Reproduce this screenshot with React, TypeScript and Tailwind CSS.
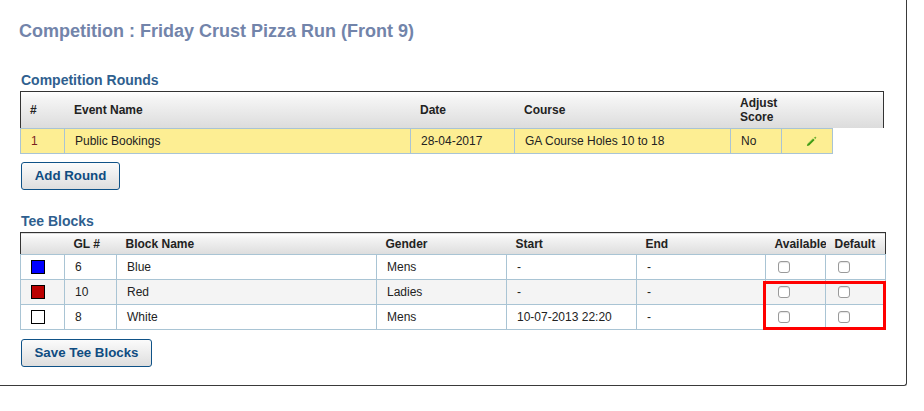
const headBg = "bg-[linear-gradient(#ffffff_0%,#f4f4f4_20%,#dcdcdc_100%)]";

function Pencil() {
  return (
    <svg width="11" height="11" viewBox="0 0 12 12" className="block ml-[24px]">
      <path d="M1 11 L1.6 8.6 L7.6 2.6 L9.4 4.4 L3.4 10.4 Z" fill="#3f9a12" />
      <path d="M2.4 8.4 L7.6 3.2" stroke="#86c95a" strokeWidth="0.7" />
      <path d="M10 0.5 L10.5 1.6 L11.6 2 L10.5 2.4 L10 3.5 L9.5 2.4 L8.4 2 L9.5 1.6 Z" fill="#3f9a12" />
    </svg>
  );
}

function Check() {
  return <span className="block w-[12px] h-[12px] rounded-[3px] border border-[#9a9a9a] bg-white shadow-[inset_0_1px_1px_#e4e4e4]" />;
}

function Swatch({ c }: { c: string }) {
  return <span className={`block w-[14px] h-[14px] border border-black ${c}`} />;
}

function Button({ children, w }: { children: string; w: string }) {
  return (
    <button className={`${w} h-[28px] rounded-[3px] border border-[#0f5287] text-[13.3px] font-bold text-[#0f4c81] bg-[linear-gradient(#fbfbfb,#dedede)]`}>
      {children}
    </button>
  );
}

const td = "border border-[#a9c4d4] text-[12px] text-[#222] p-0";
const th = "text-left text-[12px] font-bold text-[#222] p-0";

const tees = [
  { c: "bg-[#0000ff]", gl: "6", name: "Blue", g: "Mens", s: "-", bg: "bg-white" },
  { c: "bg-[#bb0000]", gl: "10", name: "Red", g: "Ladies", s: "-", bg: "bg-[#f4f4f4]" },
  { c: "bg-white", gl: "8", name: "White", g: "Mens", s: "10-07-2013 22:20", bg: "bg-white" },
];

export default function App() {
  return (
    <div className="w-[924px] h-[411px] bg-white overflow-hidden font-['Liberation_Sans',Arial,sans-serif]">
      <div className="relative w-[907px] h-[386px] border-r border-b border-[#3a3a3a] rounded-br-[3px]">
        <h1 className="pl-[19px] pt-[20px] h-[72px] text-[18px] leading-[22px] font-bold text-[#7284aa]">
          Competition : Friday Crust Pizza Run (Front 9)
        </h1>
        <h2 className="pl-[21px] h-[19px] text-[14px] leading-[16px] font-bold text-[#2f5f8f]">Competition Rounds</h2>

        <div className="ml-[20px] w-[864px]">
          <div className={`flex items-center h-[37px] border-t border-l border-r border-[#333] ${headBg} text-[12px] font-bold text-[#222] leading-[14px]`}>
            <span className="w-[53px] pl-[9px]">#</span>
            <span className="w-[346px]">Event Name</span>
            <span className="w-[104px]">Date</span>
            <span className="w-[216px]">Course</span>
            <span className="w-[100px]">Adjust<br />Score</span>
          </div>
          <table className="table-fixed border-collapse w-[812px] bg-[#fdee93]">
            <colgroup>
              <col className="w-[44px]" />
              <col className="w-[346px]" />
              <col className="w-[104px]" />
              <col className="w-[216px]" />
              <col className="w-[51px]" />
              <col className="w-[51px]" />
            </colgroup>
            <tbody>
              <tr className="h-[25px]">
                <td className={`${td} pl-[10px] !text-[#7a1f1f]`}>1</td>
                <td className={`${td} pl-[10px]`}>Public Bookings</td>
                <td className={`${td} pl-[10px]`}>28-04-2017</td>
                <td className={`${td} pl-[10px]`}>GA Course Holes 10 to 18</td>
                <td className={`${td} pl-[10px]`}>No</td>
                <td className={td}><Pencil /></td>
              </tr>
            </tbody>
          </table>
        </div>

        <div className="pl-[21px] pt-[8px]">
          <Button w="w-[99px]">Add Round</Button>
        </div>

        <h2 className="pl-[21px] pt-[23px] h-[42px] text-[14px] leading-[16px] font-bold text-[#2f5f8f]">Tee Blocks</h2>

        <div className="relative ml-[20px] w-[865px]">
          <table className="table-fixed border-collapse w-[865px]">
            <colgroup>
              <col className="w-[44px]" />
              <col className="w-[52px]" />
              <col className="w-[260px]" />
              <col className="w-[130px]" />
              <col className="w-[130px]" />
              <col className="w-[129px]" />
              <col className="w-[60px]" />
              <col className="w-[60px]" />
            </colgroup>
            <thead>
              <tr className={`h-[22px] ${headBg} border-t border-l border-r border-[#333]`}>
                <th className={th} />
                <th className={`${th} pl-[9px]`}>GL #</th>
                <th className={`${th} pl-[9px]`}>Block Name</th>
                <th className={`${th} pl-[9px]`}>Gender</th>
                <th className={`${th} pl-[9px]`}>Start</th>
                <th className={`${th} pl-[9px]`}>End</th>
                <th className={`${th} pl-[9px] overflow-hidden whitespace-nowrap`}>Available</th>
                <th className={`${th} pl-[9px]`}>Default</th>
              </tr>
            </thead>
            <tbody>
              {tees.map((t) => (
                <tr key={t.name} className={`h-[25px] ${t.bg}`}>
                  <td className={`${td} pl-[10px]`}><Swatch c={t.c} /></td>
                  <td className={`${td} pl-[10px]`}>{t.gl}</td>
                  <td className={`${td} pl-[10px]`}>{t.name}</td>
                  <td className={`${td} pl-[10px]`}>{t.g}</td>
                  <td className={`${td} pl-[10px]`}>{t.s}</td>
                  <td className={`${td} pl-[10px]`}>-</td>
                  <td className={`${td} pl-[12px]`}><Check /></td>
                  <td className={`${td} pl-[12px]`}><Check /></td>
                </tr>
              ))}
            </tbody>
          </table>
          <div className="absolute left-[743px] top-[49px] w-[123px] h-[49px] border-[3px] border-[#ff0000]" />
        </div>

        <div className="pl-[21px] pt-[9px]">
          <Button w="w-[131px]">Save Tee Blocks</Button>
        </div>
      </div>
    </div>
  );
}
